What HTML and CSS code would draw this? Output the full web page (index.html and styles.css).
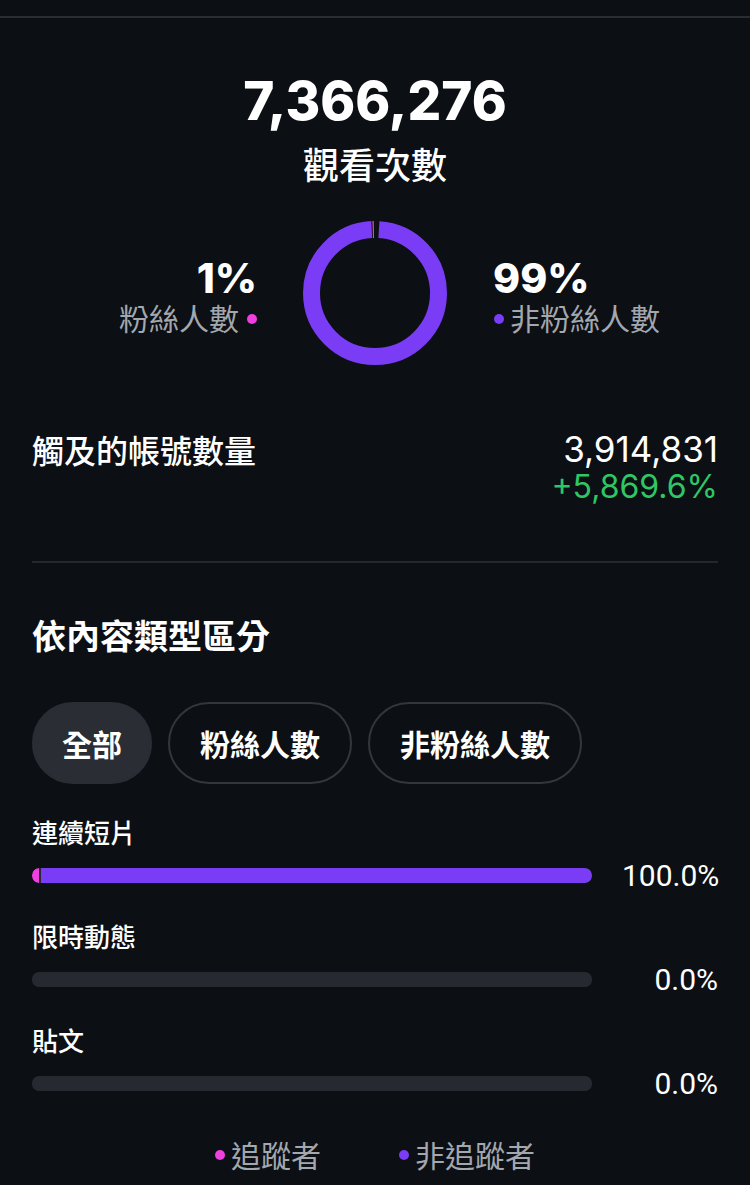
FILE: index.html
```html
<!DOCTYPE html>
<html lang="zh-Hant">
<head>
<meta charset="utf-8">
<link rel="stylesheet" href="styles.css">
</head>
<body>
<div class="topline"></div>
<main class="page">
  <section class="hero">
    <div class="hero-num">7,366,276</div>
    <div class="hero-label">觀看次數</div>
  </section>

  <section class="split">
    <div class="side side-left">
      <div class="pct">1%</div>
      <div class="side-label">粉絲人數<span class="dot dot-pink"></span></div>
    </div>
    <svg class="donut" width="144" height="144" viewBox="0 0 144 144">
      <circle cx="72" cy="72" r="63.5" fill="none" stroke="#7a3cf4" stroke-width="17"
        stroke-dasharray="391 8" stroke-dashoffset="-4" transform="rotate(-90 72 72)"/>
      <circle cx="72" cy="72" r="63.5" fill="none" stroke="#e93fdc" stroke-width="17"
        stroke-dasharray="1.2 397.8" stroke-dashoffset="3" transform="rotate(-90 72 72)"/>
    </svg>
    <div class="side side-right">
      <div class="pct">99%</div>
      <div class="side-label"><span class="dot dot-purple"></span>非粉絲人數</div>
    </div>
  </section>

  <section class="reach">
    <div class="reach-label">觸及的帳號數量</div>
    <div class="reach-values">
      <div class="reach-num">3,914,831</div>
      <div class="reach-change">+5,869.6%</div>
    </div>
  </section>

  <div class="divider"></div>

  <h2 class="section-title">依內容類型區分</h2>

  <div class="tabs">
    <div class="tab tab-active">全部</div>
    <div class="tab">粉絲人數</div>
    <div class="tab">非粉絲人數</div>
  </div>

  <div class="rows">
    <div class="row">
      <div class="row-label">連續短片</div>
      <div class="row-line">
        <div class="track">
          <span class="seg seg-pink" style="width:1.2%"></span>
          <span class="seg seg-purple" style="width:98.8%"></span>
        </div>
        <div class="row-pct">100.0%</div>
      </div>
    </div>
    <div class="row">
      <div class="row-label">限時動態</div>
      <div class="row-line">
        <div class="track"></div>
        <div class="row-pct">0.0%</div>
      </div>
    </div>
    <div class="row">
      <div class="row-label">貼文</div>
      <div class="row-line">
        <div class="track"></div>
        <div class="row-pct">0.0%</div>
      </div>
    </div>
  </div>

  <div class="legend">
    <div class="legend-item"><span class="dot dot-pink"></span>追蹤者</div>
    <div class="legend-item"><span class="dot dot-purple"></span>非追蹤者</div>
  </div>
</main>
</body>
</html>
```
FILE: styles.css
```css
* { box-sizing: border-box; }
html, body {
  margin: 0;
  padding: 0;
  background: #0c0f14;
  color: #ffffff;
  font-family: Inter, "Noto Sans CJK TC", sans-serif;
}
body { width: 750px; height: 1185px; overflow: hidden; }

.topline {
  margin-top: 16px;
  height: 2px;
  background: #2a2d33;
}

.page { padding: 0 32px; }

.hero { text-align: center; }
.hero-num {
  margin-top: 53px;
  font-size: 53px;
  font-weight: 800;
  line-height: 60px;
}
.hero-label {
  margin-top: 10px;
  font-family: "Noto Sans CJK TC", sans-serif;
  font-size: 36px;
  font-weight: 500;
  line-height: 44px;
}

.split {
  margin-top: 36px;
  display: grid;
  grid-template-columns: 1fr auto 1fr;
  align-items: center;
  column-gap: 46px;
}
.donut { display: block; }
.side { display: flex; flex-direction: column; padding-top: 6px; }
.side-left { align-items: flex-end; }
.side-right { align-items: flex-start; }
.pct {
  font-size: 41px;
  font-weight: 800;
  line-height: 42px;
}
.side-label {
  display: flex;
  align-items: center;
  font-family: "Noto Sans CJK TC", sans-serif;
  font-size: 30px;
  line-height: 36px;
  color: #a3a7ae;
}
.dot {
  display: inline-block;
  width: 10px;
  height: 10px;
  border-radius: 50%;
  flex: none;
}
.dot-pink { background: #ee3fe0; }
.dot-purple { background: #7a3cf4; }
.side-left .dot { margin-left: 8px; margin-top: 4px; }
.side-right .dot { margin-right: 6px; margin-top: 4px; margin-left: 1px; }

.reach {
  margin-top: 64px;
  display: flex;
  justify-content: space-between;
  align-items: flex-start;
}
.reach-label {
  font-family: "Noto Sans CJK TC", sans-serif;
  font-size: 32px;
  font-weight: 500;
  line-height: 44px;
  margin-top: -2px;
}
.reach-values { text-align: right; }
.reach-num {
  font-size: 35px;
  line-height: 40px;
}
.reach-change {
  font-size: 32px;
  line-height: 36px;
  color: #2fc764;
}

.divider {
  margin-top: 56px;
  height: 2px;
  background: #24272d;
}

.section-title {
  margin: 49px 0 0;
  font-family: "Noto Sans CJK TC", sans-serif;
  font-size: 34px;
  font-weight: 700;
  line-height: 46px;
}

.tabs {
  margin-top: 44px;
  display: flex;
  gap: 16px;
}
.tab {
  height: 82px;
  padding: 0 30px;
  border-radius: 41px;
  border: 2px solid #33363c;
  display: flex;
  align-items: center;
  font-family: "Noto Sans CJK TC", sans-serif;
  font-size: 30px;
  font-weight: 700;
}
.tab-active {
  padding: 0 28px;
  background: #2a2d33;
  border-color: #2a2d33;
}

.rows { margin-top: 30px; display: flex; flex-direction: column; gap: 24px; }
.row-label {
  font-family: "Noto Sans CJK TC", sans-serif;
  font-size: 26px;
  font-weight: 500;
  line-height: 36px;
}
.row-line {
  margin-top: 6px;
  display: flex;
  align-items: center;
  gap: 30px;
}
.track {
  flex: none;
  width: 560px;
  height: 15px;
  border-radius: 7px;
  background: #26292f;
  display: flex;
  overflow: hidden;
}
.seg { display: block; height: 100%; }
.seg-pink { background: #ee3fe0; border-radius: 7px 0 0 7px; }
.seg-purple { background: #7a3cf4; margin-left: 2px; border-radius: 0 7px 7px 0; }
.row-pct {
  flex: 1;
  text-align: right;
  font-family: Roboto, sans-serif;
  font-size: 30px;
  line-height: 36px;
  padding-top: 2px;
}

.legend {
  margin-top: 32px;
  display: flex;
  justify-content: center;
  gap: 78px;
  font-family: "Noto Sans CJK TC", sans-serif;
  font-size: 30px;
  line-height: 40px;
  color: #a3a7ae;
}
.legend-item { display: flex; align-items: center; }
.legend-item .dot { margin-right: 6px; margin-top: 2px; }
```
